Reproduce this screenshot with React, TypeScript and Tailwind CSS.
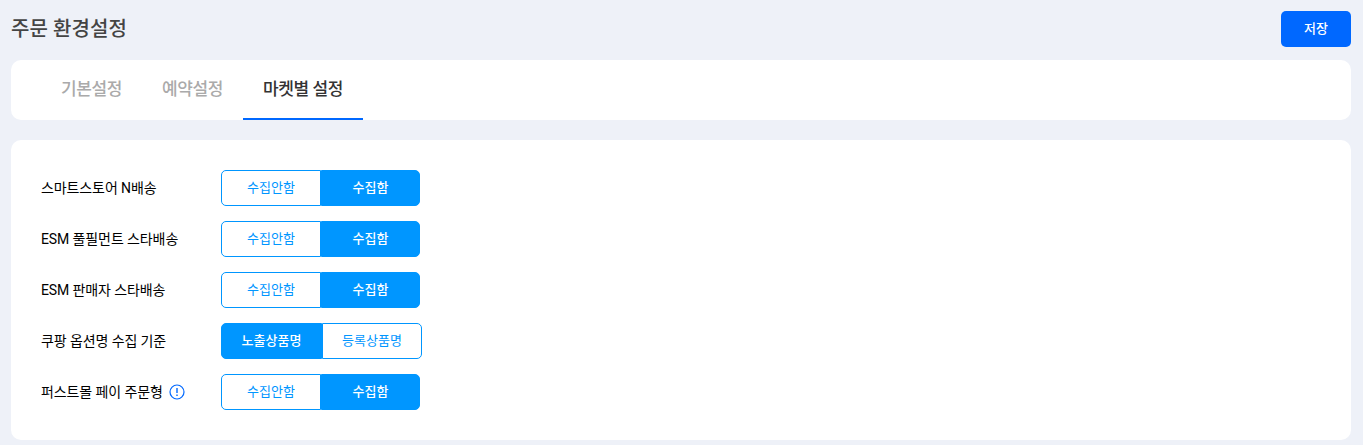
const font = "font-['Roboto','Noto_Sans_CJK_KR',sans-serif]";

function Toggle({ left, right, active, wide }: { left: string; right: string; active: 0 | 1; wide?: boolean }) {
  const on = "bg-[#0096ff] text-white font-medium border-[#0096ff]";
  const off = "bg-white text-[#0096ff] border-[#0096ff]";
  return (
    <div className={`flex h-9 text-[13px] ${wide ? "w-[201px]" : "w-[199px]"}`}>
      <div className={`flex h-full ${wide ? "w-[101px]" : "w-[100px]"} items-center justify-center rounded-l-[5px] border ${active === 0 ? on : off}`}>{left}</div>
      <div className={`flex h-full flex-1 items-center justify-center rounded-r-[5px] border ${active === 1 ? on : off}`}>{right}</div>
    </div>
  );
}

function Row({ label, info, children }: { label: string; info?: boolean; children: React.ReactNode }) {
  return (
    <div className="flex h-9 items-center">
      <div className="flex w-[180px] items-center text-[14px] tracking-[-0.1px] text-black">
        <span>{label}</span>
        {info && (
          <svg className="ml-1.5 h-4 w-4" viewBox="0 0 16 16" fill="none">
            <circle cx="8" cy="8" r="7" stroke="#0068ff" strokeWidth="1.2" />
            <path d="M8 4v5M8 10.6v1.4" stroke="#0068ff" strokeWidth="1.4" />
          </svg>
        )}
      </div>
      {children}
    </div>
  );
}

export default function App() {
  return (
    <div className={`${font} h-[445px] overflow-hidden bg-[#eef1f8] pl-[11px] pr-[12px] pt-[11px]`}>
      <div className="flex h-9 items-center justify-between">
        <h1 className="text-[20px] font-medium tracking-[0.1px] text-[#444]">주문 환경설정</h1>
        <button className="h-9 w-[70px] rounded-[5px] bg-[#0068ff] text-[13px] font-medium text-white">저장</button>
      </div>
      <div className="mt-[13px] flex h-[60px] rounded-[10px] bg-white pl-[30px] text-[17px] font-medium tracking-[-0.4px]">
        <div className="flex h-full items-center px-5 text-[#aaa]">기본설정</div>
        <div className="flex h-full items-center px-5 text-[#aaa]">예약설정</div>
        <div className="flex h-full items-center border-b-2 border-[#0068ff] px-5 pt-0.5 text-[#333]">마켓별 설정</div>
      </div>
      <div className="mt-5 flex h-[300px] flex-col gap-[15px] rounded-[10px] bg-white py-[30px] pl-[30px]">
        <Row label="스마트스토어 N배송"><Toggle left="수집안함" right="수집함" active={1} /></Row>
        <Row label="ESM 풀필먼트 스타배송"><Toggle left="수집안함" right="수집함" active={1} /></Row>
        <Row label="ESM 판매자 스타배송"><Toggle left="수집안함" right="수집함" active={1} /></Row>
        <Row label="쿠팡 옵션명 수집 기준"><Toggle left="노출상품명" right="등록상품명" active={0} wide /></Row>
        <Row label="퍼스트몰 페이 주문형" info><Toggle left="수집안함" right="수집함" active={1} /></Row>
      </div>
    </div>
  );
}
